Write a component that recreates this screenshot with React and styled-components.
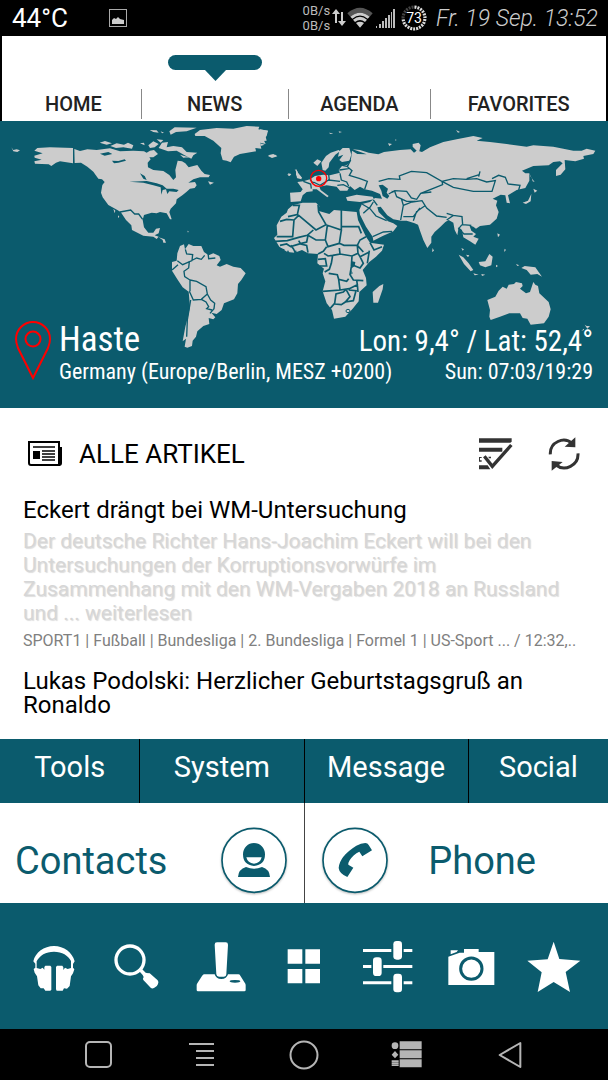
import styled, { createGlobalStyle } from "styled-components"

const teal = "#0b5b6d"

const tabs = [
    { name: "HOME", grow: 136 },
    { name: "NEWS", grow: 147, active: true },
    { name: "AGENDA", grow: 143 },
    { name: "FAVORITES", grow: 175 },
]

const folders = [
    { name: "Tools", grow: 140 },
    { name: "System", grow: 164 },
    { name: "Message", grow: 164 },
    { name: "Social", grow: 140 },
]

export default function App(){
    return(
        <Page>
            <GlobalStyle/>
            <StatusBar/>
            <TabPanel>
                {tabs.map((tab) => (
                    <Tab key={tab.name} $grow={tab.grow}>
                        <Marker>{tab.active && <MarkerShape/>}</Marker>
                        <TabLabel>{tab.name}</TabLabel>
                    </Tab>
                ))}
            </TabPanel>
            <Location/>
            <News/>
            <Folders>
                {folders.map((folder) => (
                    <Folder key={folder.name} $grow={folder.grow}>{folder.name}</Folder>
                ))}
            </Folders>
            <Calls>
                <Call>
                    <CallLabel>Contacts</CallLabel>
                    <Round><PersonIcon/></Round>
                </Call>
                <Call $second>
                    <Round><PhoneIcon/></Round>
                    <CallLabel>Phone</CallLabel>
                </Call>
            </Calls>
            <Dock/>
            <NavBar/>
        </Page>
    );
}

function StatusBar(){
    return(
        <Status>
            <Temperature>44°C</Temperature>
            <svg width="20" height="20" viewBox="0 0 20 20">
                <rect x="1.5" y="1.5" width="17" height="17" fill="none" stroke="#aaa"/>
                <path d="M4 16v-4l2-2 2 1 2-2 2 2 4 1v4z" fill="#ccc"/>
            </svg>
            <Spacer/>
            <Speed><span>0B/s</span><span>0B/s</span></Speed>
            <svg width="14" height="20" viewBox="0 0 14 20" fill="#ccc">
                <path d="M4 1L0 6h3v9h2V6h3zM9 4h2v9h3l-4 5-4-5h3z"/>
            </svg>
            <svg width="28" height="22" viewBox="0 0 84 66">
                <path d="M4 19Q42-14 80 19L71 29Q42 6 13 29z" fill="#555"/>
                <path d="M13 29Q42 5 71 29L65 35Q42 16 19 35zM21 38Q42 21 63 38L57 45Q42 33 27 45zM30 48Q42 40 54 48L42 62z" fill="#ccc"/>
            </svg>
            <svg width="22" height="22" viewBox="0 0 22 22" fill="#bbb">
                <path d="M2 19h1v2H2zM5 17h2v4H5zM8 14h2v7H8zM11 11h2v10h-2zM14 8h2v13h-2zM17 5h1v16h-1zM19 2h2v19h-2z"/>
            </svg>
            <Battery>
                <svg width="28" height="28" viewBox="0 0 28 28">
                    <circle cx="14" cy="14" r="11" fill="none" stroke="#444" strokeWidth="3"/>
                    <circle cx="14" cy="14" r="11" fill="none" stroke="#ddd" strokeWidth="3" strokeDasharray="73 27" pathLength="100" transform="rotate(-90 14 14)"/>
                    <circle cx="14" cy="14" r="11" fill="none" stroke="#000" strokeWidth="4" strokeDasharray="1 2"/>
                </svg>
                <BatteryText>73</BatteryText>
            </Battery>
            <DateText>Fr. 19 Sep. 13:52</DateText>
        </Status>
    );
}

function MarkerShape(){
    return(
        <svg width="94" height="28" viewBox="0 0 94 28" fill={teal}>
            <rect x="0" y="0" width="94" height="15" rx="7.5"/>
            <path d="M36 14h23L47.5 26z"/>
        </svg>
    );
}

function Location(){
    return(
        <MapSection>
            <WorldMap/>
            <Place>
                <Pin width="36" height="60" viewBox="0 0 36 60" fill="none" stroke="#f00" strokeWidth="2">
                    <path d="M18 57L3 27Q1 22 1 18a17 17 0 0 1 34 0Q35 22 33 27z"/>
                    <circle cx="18" cy="18" r="7.5"/>
                </Pin>
                <PlaceText>
                    <Line $large><span>Haste</span><Coords>Lon: 9,4° / Lat: 52,4°</Coords></Line>
                    <Line><span>Germany (Europe/Berlin, MESZ +0200)</span><span>Sun: 07:03/19:29</span></Line>
                </PlaceText>
            </Place>
        </MapSection>
    );
}

function News(){
    return(
        <NewsSection>
            <NewsHeader>
                <svg width="34" height="26" viewBox="0 0 34 26">
                    <path d="M31 6h3v16q0 3-3 3z"/>
                    <path d="M1 1h30v23H3q-2 0-2-2z" fill="#fff" stroke="#000" strokeWidth="2"/>
                    <path d="M5 6h22M14 10h13M14 13h13M14 16h13M14 19h13" stroke="#000" strokeWidth="1.3"/>
                    <path d="M5 10h7v8H5z"/>
                </svg>
                <NewsTitle>ALLE ARTIKEL</NewsTitle>
                <IconButton aria-label="Mark all as read">
                    <svg width="36" height="34" viewBox="0 0 108 102" fill="#333">
                        <path d="M3 4h98v10l-4 3H3zM3 32h70v12H3zM3 60h8v3H6v7h5v4H3zM18 64l6-6 12 12 0 8zM3 85h26l8 12H3zM31 59h8v5h-6z"/>
                        <path d="M19 60L43 88 100 26" fill="none" stroke="#fff" strokeWidth="14"/>
                        <path d="M19 58L43 88 100 24" fill="none" stroke="#333" strokeWidth="10"/>
                    </svg>
                </IconButton>
                <IconButton aria-label="Refresh">
                    <svg width="32" height="34" viewBox="0 0 96 102">
                        <path d="M7 52C5 15 48-3 73 20M90 49C92 85 50 105 24 84" fill="none" stroke="#333" strokeWidth="9"/>
                        <path d="M82 1v30l-32-2zM11 101V72l33 3z" fill="#333"/>
                    </svg>
                </IconButton>
            </NewsHeader>
            <ArticleTitle>Eckert drängt bei WM-Untersuchung</ArticleTitle>
            <Excerpt>
                Der deutsche Richter Hans-Joachim Eckert will bei den Untersuchungen der
                Korruptionsvorwürfe im Zusammenhang mit den WM-Vergaben 2018 an Russland und ... weiterlesen
            </Excerpt>
            <Source>SPORT1 | Fußball | Bundesliga | 2. Bundesliga | Formel 1 | US-Sport ... / 12:32,..</Source>
            <ArticleTitle>Lukas Podolski: Herzlicher Geburtstagsgruß an Ronaldo</ArticleTitle>
        </NewsSection>
    );
}

function PersonIcon(){
    return(
        <svg width="68" height="68" viewBox="0 0 204 204">
            <circle cx="102" cy="100" r="96" fill="#fff" stroke={teal} strokeWidth="5"/>
            <path d="M69 82a33 34 0 0 1 66 0q0 32-33 35-33-3-33-35zM54 150q1-23 24-30 12 5 24 5t24-5q23 7 24 30z" fill={teal}/>
            <path d="M79 91h46q-4 17-23 19-19-2-23-19z" fill="#fff"/>
        </svg>
    );
}

function PhoneIcon(){
    return(
        <svg width="68" height="68" viewBox="0 0 204 204">
            <circle cx="102" cy="100" r="96" fill="#fff" stroke={teal} strokeWidth="5"/>
            <path d="M106 56q14-7 27-8 7 0 10 6l10 16-29 18-9-14q-18 8-29 26-5 8-4 13l15 9-18 28q-24-10-26-27 2-35 53-67z" fill={teal}/>
        </svg>
    );
}

function Dock(){
    return(
        <DockBar>
            <DockButton aria-label="Music">
                <svg width="56" height="56" viewBox="78 114 168 168" fill="#fff">
                    <path d="M100 184C106 157 132 138 162 138S217 157 224 184L219 192V203L223 208 219 220 213 229 209 258 201 266 192 265 188 272H170L168 268V201L171 197H187L190 202V210L195 203 203 207 213 204V183C204 166 187 155 162 155S119 166 110 184V204L121 207 128 203 133 209V201L136 197H151L154 201V269L151 272H136L131 265 122 265 115 256 111 229 104 218 101 207 106 203V191z"/>
                </svg>
            </DockButton>
            <DockButton aria-label="Search">
                <svg width="56" height="56" viewBox="329 114 168 168">
                    <circle cx="392" cy="180" r="42" fill="none" stroke="#fff" strokeWidth="10"/>
                    <path d="M420 214l8-7 11 11 8 2q2-2 6 1l22 20q4 5 1 11-2 8-12 12-6 3-10-1l-22-23q-3-3 1-9l-3-6z" fill="#fff"/>
                </svg>
            </DockButton>
            <DockButton aria-label="Games">
                <svg width="56" height="56" viewBox="580 114 168 168">
                    <path d="M645 134q0-7 7-7h26q7 0 7 7l-5 89q0 7-7 7h-15q-7 0-8-7zM613 223h32q4 14 20 14t20-14h31q4 0 6 4l15 24q1 2 1 5v14q0 4-4 4H595q-4 0-4-4v-14q0-3 2-6l14-22q3-5 6-5z" fill="#fff"/>
                    <ellipse cx="706" cy="244" rx="16" ry="4" fill={teal}/>
                </svg>
            </DockButton>
            <DockButton aria-label="Apps">
                <svg width="56" height="56" viewBox="0 0 168 168" fill="#fff">
                    <path d="M32 34h44v43H32zM85 34h44v43H85zM32 93h44v43H32zM85 93h44v43H85z"/>
                </svg>
            </DockButton>
            <DockButton aria-label="Settings">
                <svg width="56" height="56" viewBox="170 114 168 168" fill="#fff">
                    <path d="M179 147h85v9h-85zM301 147h26v9h-26zM179 195h25v9h-25zM240 195h87v9h-87zM179 244h85v9h-85zM301 244h26v9h-26z"/>
                    <rect x="270" y="123" width="26" height="56" rx="10"/>
                    <rect x="209" y="172" width="26" height="56" rx="10"/>
                    <rect x="270" y="221" width="26" height="56" rx="10"/>
                </svg>
            </DockButton>
            <DockButton aria-label="Camera">
                <svg width="56" height="56" viewBox="421 114 168 168" fill="#fff">
                    <path d="M441 151h22l-4 5-18 7zM434 170l34-12h13v-11h44v9h47v99H434z"/>
                    <circle cx="503" cy="206" r="32" stroke={teal} strokeWidth="9"/>
                </svg>
            </DockButton>
            <DockButton aria-label="Favorites">
                <svg width="56" height="56" viewBox="672 114 168 168" fill="#fff">
                    <path d="M752 125L769 177 832 182 788 216 801 276 752 246 704 276 716 217 673 182 734 178z"/>
                </svg>
            </DockButton>
        </DockBar>
    );
}

function NavBar(){
    return(
        <Nav>
            <DockButton aria-label="Recent">
                <svg width="40" height="40" viewBox="0 0 40 40" fill="none" stroke="#b5b5b5" strokeWidth="2">
                    <rect x="8" y="7" width="25" height="25" rx="4"/>
                </svg>
            </DockButton>
            <DockButton aria-label="Menu">
                <svg width="40" height="40" viewBox="0 0 40 40" stroke="#b5b5b5" strokeWidth="2">
                    <path d="M8 9h25M15 16h18M15 23h18M15 30h18"/>
                </svg>
            </DockButton>
            <DockButton aria-label="Home">
                <svg width="40" height="40" viewBox="0 0 40 40" fill="none" stroke="#b5b5b5" strokeWidth="2">
                    <circle cx="20" cy="20" r="13.5"/>
                </svg>
            </DockButton>
            <DockButton aria-label="List">
                <svg width="40" height="40" viewBox="250 404 120 120" fill="#b5b5b5">
                    <path d="M288 423h66v24h-66zM288 450h66v24h-66zM288 477h66v24h-66zM274 452l10 11-10 11-10-11zM264 480h21v5h-21zM264 486h21v5h-21zM264 492h21v5h-21z"/>
                    <circle cx="274" cy="436" r="10"/>
                </svg>
            </DockButton>
            <DockButton aria-label="Back">
                <svg width="40" height="40" viewBox="559 404 120 120" fill="none" stroke="#b5b5b5" strokeWidth="6">
                    <path d="M588 464L650 428V500z" strokeLinejoin="round"/>
                </svg>
            </DockButton>
        </Nav>
    );
}

// both hemispheres are drawn on a grid three times finer than the view box
function WorldMap(){
    return(
        <MapSvg viewBox="0 0 608 287" preserveAspectRatio="xMidYMin slice" aria-hidden="true">
            <g transform="translate(0 -1) scale(0.33333)" fill="#ccc">
                <path d="M34 82L40 90 50 88 60 91 52 96 40 94zM103 92L112 84 150 82 219 84V130L180 124 168 128 154 138 146 133 105 131 103 124 125 119 104 113 103 107 128 100z"/>
                <path d="M223 87L240 93 262 88 290 90 330 85 360 94 400 92 432 94 440 98 450 92 462 90 474 102 460 112 448 112 452 118 443 128 444 142 460 150 490 153 508 165 520 180 528 172 526 150 533 122 546 124 556 130 566 142 580 138 592 135 604 152 614 162 630 165 626 172 600 172 580 178 565 188 585 186 590 196 584 204 570 206 560 215 548 225 530 238 528 250 512 266 508 276 515 298 510 298 500 280 480 276 470 280 455 278 432 285 428 300 432 322 445 338 460 338 468 326 480 324 476 340 464 346 476 350 470 357 460 350 430 347 396 330 394 316 378 300 362 276 352 270 325 255 308 232 303 218 307 195 314 186 306 178 295 176 280 155 262 140 243 128 224 129z"/>
                <path d="M584 42L600 30 650 24 700 26 740 18 778 20 775 28 804 32 800 48 790 58 797 72 780 68 784 86 766 84 768 94 720 102 702 110 692 127 680 122 668 120 662 100 664 84 640 62 614 48 586 48z"/>
                <path d="M299 68L315 63 336 70 320 74zM331 78L350 70 372 74 384 68 400 76 396 86 370 82 348 84zM449 30L470 31 476 38 460 36zM482 34L492 38 486 40zM508 34L524 22 590 23 560 34 528 36 512 44zM445 76L460 64 476 72 464 82 450 84zM470 58L490 60 482 68zM476 84L486 68 504 66 500 82 520 78 546 82 560 96 592 98 580 106 574 116 554 106 530 92 504 94zM420 70L432 68 434 76zM540 104L566 112 550 113zM624 184L642 188 630 194zM804 108L826 104 832 109 816 114zM862 162L874 164 866 168zM888 146L894 158 904 170 892 174 888 164zM340 266L346 272 344 280zM354 286L358 290 354 294zM476 352L494 358 498 368 490 368 488 360zM562 332L566 334 564 338z"/>
                <path d="M540 378L552 373 555 388 566 372 580 378 604 378 612 396 626 406 640 400 658 408 662 420 650 436 660 440 680 432 700 440 722 444 737 460 724 480 714 492 712 520 702 538 672 550 665 570 650 582 634 578 646 592 640 598 626 594 628 612 610 618 592 634 588 650 578 662 576 678 562 683 554 680 558 656 548 664 556 620 564 590 570 560 566 515 548 502 532 478 516 452 516 426 530 422 532 400z"/>
                <path d="M300 101L325 96 337 102 314 107zM336 122L355 123 374 118 378 122 355 128 342 130zM420 160L434 168 440 180 430 176zM388 185L440 183 470 190 488 196 500 206 520 206 536 210 530 216 508 214 502 222 498 208 488 210 484 224 482 202 460 196 430 188z" fill={teal}/>
                <path d="M556 388L560 402 578 404 576 422 548 434 532 422M516 450L534 434M568 424L566 444 552 454 554 470 570 480 570 514M578 420L590 414 604 418 614 406M624 398L626 416 646 414M570 480L590 484 618 500 622 522 604 538 580 540 568 514M604 538L618 546 626 560 620 566 636 570M622 522L632 540 644 550 642 566 630 580M572 540L562 600 560 650M360 276L392 270 404 282 416 282 428 298" fill="none" stroke={teal} strokeWidth="4"/>
            </g>
            <g transform="translate(260 -1) scale(0.33333)" fill="#ccc">
                <path d="M276 92L292 102 320 103 278 88 300 90 326 98 355 103 372 96 420 90 452 88 462 98 470 92 458 80 458 72 476 68 482 76 478 94 486 96 510 82 550 66 590 58 640 48 668 54 650 62 690 66 740 72 800 80 820 76 880 80 940 92 965 92 980 86 1006 92 1000 102 970 108 972 116 946 124 914 120 916 148 902 164 888 168 888 150 908 130 900 124 880 126 866 136 820 138 786 152 796 160 808 160 808 182 796 204 770 210 744 226 750 250 740 248 736 226 722 224 698 236 712 242 708 256 716 276 710 296 690 314 660 318 648 326 640 320 628 316 634 332 648 342 640 350 656 356 646 374 630 364 610 352 606 330 596 322 592 346 584 330 580 308 566 300 556 306 540 322 524 336 514 350 514 368 502 384 490 360 480 332 474 314 464 310 440 302 424 302 400 298 382 286 362 260 352 262 356 276 384 304 400 310 412 318 400 334 368 348 340 362 338 350 318 320 300 284 298 270 306 252 330 246 345 234 366 236 360 222 336 212 314 208 300 200 284 210 270 198 262 212 240 212 230 200 200 196 178 200 182 210 206 228 202 232 170 208 158 208 158 214 140 216 128 226 122 244 92 246 90 218 122 216 128 208 112 186 130 184 150 178 165 168 190 164 210 166 240 158 236 150 246 138 262 134 272 122 274 110z"/>
                <path d="M188 150L184 128 198 108 212 98 236 90 240 94 226 104 208 128 206 142 196 152zM234 110L238 94 248 84 268 84 274 104 268 122 246 126 238 120 250 104zM160 128L172 118 184 124 172 138zM84 160L94 162 88 168zM104 146L112 154 114 166 126 172 124 178 110 174 114 168zM258 232L290 224 338 230 342 238 300 246 262 242zM206 38L220 40 212 42zM236 34L246 36 238 38zM384 70L396 72 388 78zM588 30L600 36 594 38zM406 58L410 60 406 62zM24 106L40 102 50 108 36 112zM0 28L24 32 16 46 20 62 0 64zM0 70L14 74 2 78zM808 160L812 170 824 186 818 184 816 176zM820 206L832 212 824 218zM788 248L804 242 814 222 812 244 798 252zM740 232L746 240 744 244zM712 340L720 344 714 352zM734 386L738 390 732 396zM518 384L522 392 516 396zM596 404L610 412 626 430 640 450 632 454 612 432zM656 426L676 424 688 402 698 410 694 436 676 442 660 436zM604 384L612 388 608 392zM618 404L628 406 624 412zM640 460L656 464 644 466zM664 462L676 464 666 468zM708 434L714 438 708 442zM768 432L778 436 772 438zM784 444L794 438 826 442 846 470 832 462 812 464 800 450zM340 548L338 516 358 498 370 492 368 508 354 548zM974 614L980 618 990 618 982 626zM964 632L972 626 972 630z"/>
                <path d="M682 540L706 530 716 512 728 500 740 506 746 494 762 492 768 486 786 490 788 498 780 506 798 520 810 516 820 486 826 494 834 498 838 520 866 546 872 568 866 590 852 610 812 614 802 596 788 594 780 580 748 580 720 590 692 600 688 590 690 570z"/>
                <path d="M98 256L128 248 168 248 178 258 174 272 208 282 222 270 290 276 294 300 318 350 330 368 372 374 366 392 348 410 328 426 308 450 318 474 320 496 298 516 296 544 278 566 256 590 222 596 216 570 200 550 188 514 196 484 188 460 192 446 172 430 174 402 144 400 126 390 104 398 82 396 58 380 42 354 52 344 50 316 64 290 80 278 84 268z"/>
                <path d="M98 256L118 256 112 284 84 290M60 304L80 298 102 300 116 286 168 330 198 314 176 276 174 254M102 300L98 350 50 350M46 364L82 362 116 352 142 346 160 330M60 376L80 372 92 380 124 370 140 366 144 346 168 360 196 360 202 316 244 330 244 270M246 320L296 320 304 340M244 330L238 370 252 376 292 376 300 360 318 350M196 360L204 380 238 370M116 362L122 372 140 376 144 398M92 376L100 386 106 398M174 402L190 394 200 380M192 400L204 408 218 406 240 402 238 384M240 402L276 408 294 400 292 376M218 406L214 430 208 448 194 456M276 408L274 440 270 464 280 480 310 482M174 418L196 416 200 438 180 438M276 434L300 444 310 430 300 410 294 400M206 460L232 464 236 478 260 484 266 476M236 478L240 510 188 514M240 510L268 506 292 494 290 480M258 508L250 516 228 522 224 550 210 566M224 552L244 554 256 546 270 530 258 508M256 546L280 542 288 512 266 510M292 494L294 516M330 368L342 390 366 380M328 392L322 430M300 410L328 396M292 376L310 396" fill="none" stroke={teal} strokeWidth="5"/>
                <path d="M356 196L368 194 384 206 380 218 388 228 382 236 368 228 364 212zM394 212L406 214 398 218zM276 424L286 426 284 438 276 444zM274 450L278 460 274 464zM60 384L74 388 68 400zM84 390L90 402 78 402zM108 390L112 402 100 402z" fill={teal}/>
                <path d="M272 120L262 140 276 152 268 166 300 176 322 184 314 208M240 160L244 180 260 186 266 198M160 186L180 196 206 180 240 184M232 196L250 194 270 204M206 164L208 180M130 184L152 192 154 206M150 178L160 190M236 134L264 140M238 150L266 146M356 184L386 176 420 178 418 168 454 154 500 158 546 184 548 194 518 206 482 220M546 184L580 176 620 178 650 176 680 186 706 182 696 214 640 214 580 202 546 184M620 176L658 164M656 170L660 154M696 176L716 166 736 172 744 192 780 196 776 210M386 222L404 212 440 214 454 234 470 238 482 220 514 216M404 214L410 230 440 244 466 244M424 236L430 256 422 300M430 256L456 246 486 242 500 264 530 288 560 292M460 302L470 274 494 258M430 290L460 290 480 264M560 300L580 286 606 290 608 314 634 316M580 286L560 280M606 314L596 326 612 342 638 342M340 240L352 256M306 252L330 266 348 288 380 302M310 280L330 262 340 246M338 350L370 336 396 334" fill="none" stroke={teal} strokeWidth="4"/>
                <ellipse cx="264" cy="573" rx="6" ry="5" fill="none" stroke={teal} strokeWidth="3"/>
                <circle cx="176" cy="175" r="24" fill="none" stroke="#f00" strokeWidth="4"/>
                <circle cx="176" cy="176" r="8" fill="#f00"/>
            </g>
        </MapSvg>
    );
}

const GlobalStyle = createGlobalStyle`
body {
    margin: 0;
    background: #000;
    font-family: Roboto, sans-serif;
}
button {
    padding: 0;
    border: 0;
    background: none;
    font-family: inherit;
    color: inherit;
    cursor: pointer;
}
svg {
    display: block;
    flex-shrink: 0;
}
`

const Page = styled.div`
min-height: 100vh;
display: flex;
flex-direction: column;
background: #000;
`

const Status = styled.header`
height: 36px;
padding: 0 10px 0 12px;
display: flex;
align-items: center;
white-space: nowrap;
`

const Temperature = styled.span`
font-size: 26px;
color: #fff;
margin-right: 40px;
`

const Spacer = styled.div`
flex: 1;
`

const Speed = styled.div`
display: flex;
flex-direction: column;
margin-right: 2px;
font-size: 13px;
line-height: 15px;
color: #bbb;
`

const Battery = styled.div`
display: grid;
place-items: center;
margin: 0 8px 0 4px;

> * {
    grid-area: 1 / 1;
}
`

const BatteryText = styled.span`
font-size: 14px;
color: #fff;
`

const DateText = styled.time`
font-size: 23px;
font-weight: 300;
font-style: italic;
color: #ccc;
`

const TabPanel = styled.nav`
display: flex;
margin: 0 2px;
padding: 0 0 2px 4px;
background: #fff;
`

const Tab = styled.button`
flex: ${({ $grow }) => $grow} 1 0;
min-width: 0;
`

const Marker = styled.div`
height: 34px;
padding-top: 19px;
display: flex;
justify-content: center;
`

const TabLabel = styled.div`
padding: 0 2px;
font-size: 20px;
line-height: 30px;
font-weight: 500;
color: #222;
border-right: 1px solid #888;

${Tab}:last-child & {
    border-right: 0;
}
`

const MapSection = styled.section`
position: relative;
padding: 200px 15px 24px;
background: ${teal};
color: #fff;
overflow: hidden;
`

const MapSvg = styled.svg`
position: absolute;
top: 0;
left: 0;
width: 100%;
height: 100%;
`

const Place = styled.div`
position: relative;
display: flex;
gap: 8px;
`

const Pin = styled.svg``

const PlaceText = styled.div`
flex: 1;
`

const Line = styled.div`
display: flex;
justify-content: space-between;
font-family: "Roboto Condensed", Roboto, sans-serif;
font-size: ${({ $large }) => ($large ? 35 : 22)}px;
line-height: ${({ $large }) => ($large ? 38 : 25)}px;
white-space: nowrap;
`

const Coords = styled.span`
padding-top: 2px;
font-size: 29px;
line-height: 36px;
`

const NewsSection = styled.main`
height: 331px;
box-sizing: border-box;
padding: 28px 23px 0;
background: #fff;
overflow: hidden;
`

const NewsHeader = styled.div`
display: flex;
align-items: center;
padding: 0 5px;
height: 36px;
margin-bottom: 26px;
`

const NewsTitle = styled.h1`
flex: 1;
margin: 0 0 0 17px;
font-size: 26px;
font-weight: 400;
`

const IconButton = styled.button`
margin-left: 34px;
`

const ArticleTitle = styled.h2`
margin: 0;
font-size: 24px;
line-height: 24px;
font-weight: 400;
color: #000;
`

const Excerpt = styled.p`
margin: 7px 0 5px;
font-size: 21px;
line-height: 24px;
color: #d6d6d6;
text-shadow: 1px 1px 1px #ddd;
`

const Source = styled.p`
margin: 0 0 17px;
font-size: 16px;
line-height: 22px;
color: #808080;
white-space: nowrap;
`

const Folders = styled.div`
display: flex;
background: ${teal};
`

const Folder = styled.button`
flex: ${({ $grow }) => $grow} 1 0;
min-width: 0;
height: 64px;
padding-bottom: 9px;
font-size: 29px;
color: #fff;
border-right: 1px solid #000;

&:last-child {
    border-right: 0;
}
`

const Calls = styled.div`
display: flex;
background: #fff;
color: ${teal};
`

const Call = styled.button`
width: 50%;
height: 100px;
padding: ${({ $second }) => ($second ? "16px 72px 0 16px" : "16px 16px 0 15px")};
display: flex;
align-items: center;
justify-content: space-between;
border-left: ${({ $second }) => ($second ? "1px solid #444" : "0")};
`

const CallLabel = styled.span`
font-size: 38px;
`

const Round = styled.span`
border-radius: 50%;
filter: drop-shadow(0 1px 1px #bbb);
`

const DockBar = styled.nav`
height: 126px;
padding: 0 11px 0 12px;
display: flex;
background: ${teal};
`

const DockButton = styled.button`
flex: 1;
display: flex;
align-items: center;
justify-content: center;
`

const Nav = styled.nav`
height: 51px;
padding: 0 46px;
display: flex;
background: #000;
`
